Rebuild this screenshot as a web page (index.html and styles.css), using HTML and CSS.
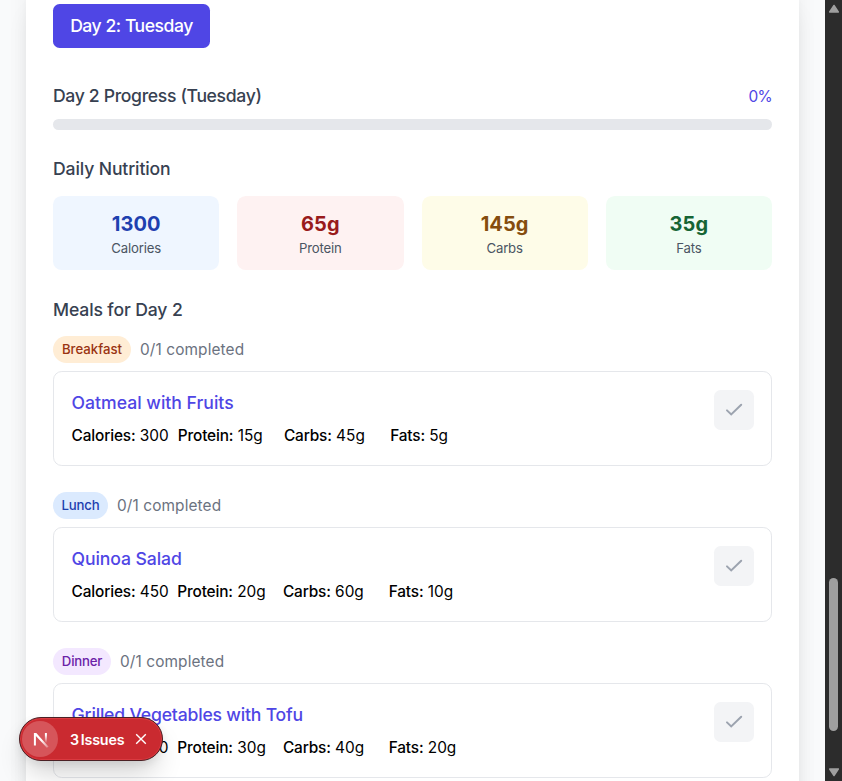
FILE: index.html
```html
<!DOCTYPE html>
<html lang="en">
<head>
<meta charset="utf-8">
<title>Meal Plan</title>
<link rel="stylesheet" href="styles.css">
</head>
<body>
<div class="window">
  <div class="page">
    <main class="panel">
      <button class="day-tab"><span>Day 2: Tuesday</span></button>
      <div class="progress-head"><h2 class="t-progress">Day 2 Progress (Tuesday)</h2><span class="percent">0%</span></div>
      <div class="progress-bar"></div>
      <h2 class="nutrition-title">Daily Nutrition</h2>
      <section class="stats">
        <div class="stat blue"><strong>1300</strong><span>Calories</span></div>
        <div class="stat red"><strong>65g</strong><span>Protein</span></div>
        <div class="stat yellow"><strong>145g</strong><span>Carbs</span></div>
        <div class="stat green"><strong>35g</strong><span>Fats</span></div>
      </section>
      <h2 class="meals-title">Meals for Day 2</h2>

      <section class="meal">
        <div class="meal-head"><span class="tag breakfast">Breakfast</span><span class="done">0/1 completed</span></div>
        <article class="card">
          <div class="info">
            <h3 class="oatmeal">Oatmeal with Fruits</h3>
            <div class="facts facts-first"><div><b>Calories:</b> 300</div><div><b>Protein:</b> 15g</div><div><b>Carbs:</b> 45g</div><div><b>Fats:</b> 5g</div></div>
          </div>
          <button class="check"><svg viewBox="0 0 20 20"><path d="M3 10.4 7.2 14.4 17.2 4.8"/></svg></button>
        </article>
      </section>

      <section class="meal">
        <div class="meal-head"><span class="tag lunch">Lunch</span><span class="done">0/1 completed</span></div>
        <article class="card">
          <div class="info">
            <h3 class="quinoa">Quinoa Salad</h3>
            <div class="facts"><div><b>Calories:</b> 450</div><div><b>Protein:</b> 20g</div><div><b>Carbs:</b> 60g</div><div><b>Fats:</b> 10g</div></div>
          </div>
          <button class="check"><svg viewBox="0 0 20 20"><path d="M3 10.4 7.2 14.4 17.2 4.8"/></svg></button>
        </article>
      </section>

      <section class="meal">
        <div class="meal-head"><span class="tag dinner">Dinner</span><span class="done">0/1 completed</span></div>
        <article class="card">
          <div class="info">
            <h3 class="grilled">Grilled Vegetables with Tofu</h3>
            <div class="facts"><div><b>Calories:</b> 350</div><div><b>Protein:</b> 30g</div><div><b>Carbs:</b> 40g</div><div><b>Fats:</b> 20g</div></div>
          </div>
          <button class="check"><svg viewBox="0 0 20 20"><path d="M3 10.4 7.2 14.4 17.2 4.8"/></svg></button>
        </article>
      </section>
    </main>
  </div>
  <aside class="scrollbar">
    <svg class="arrow" viewBox="0 0 12 10"><path d="M6 1.5 10.3 8H1.7Z"/></svg>
    <div class="thumb"></div>
    <svg class="arrow down" viewBox="0 0 12 10"><path d="M6 8.5 10.3 2H1.7Z"/></svg>
  </aside>
</div>
<div class="issues">
  <div class="logo"><svg viewBox="0 0 36 36">
    <defs>
      <linearGradient id="diag" x1="20" y1="19" x2="27" y2="27" gradientUnits="userSpaceOnUse"><stop stop-color="#fff"/><stop offset="1" stop-color="#fff" stop-opacity=".2"/></linearGradient>
      <linearGradient id="stem" x1="24" y1="14" x2="24" y2="22" gradientUnits="userSpaceOnUse"><stop stop-color="#fff"/><stop offset="1" stop-color="#fff" stop-opacity="0"/></linearGradient>
    </defs>
    <path d="M11.9 24.6V12h2.4l12.3 13.7-1.8 1L13.9 15v9.6Z" fill="url(#diag)"/><path d="M23.9 12v10" fill="none" stroke="url(#stem)" stroke-width="2"/></svg></div>
  <span class="issue-text">3 Issues</span>
  <svg class="close" viewBox="0 0 12 12"><path d="M1.2 1.2 10.8 10.8M10.8 1.2 1.2 10.8"/></svg>
</div>
</body>
</html>
```

FILE: styles.css
```css
* { box-sizing: border-box; }
body { margin: 0; font-family: Inter, "Liberation Sans", sans-serif; color: #000; overflow: hidden; }
h2, h3 { margin: 0; font-weight: 480; font-size: 17.6px; line-height: 26px; white-space: nowrap; }
h2 { color: #374151; letter-spacing: -.13px; }
.t-progress { letter-spacing: -.34px; position: relative; top: -1px; }
button { border: 0; padding: 0; font: inherit; display: flex; align-items: center; justify-content: center; }
.window { display: flex; width: 842px; height: 781px; overflow: hidden; }
.page { width: 825px; height: 781px; overflow: hidden; background: #f9fafb; padding: 0 26px; }
.panel { width: 773px; height: 900px; padding: 4px 27px 0; background: #fff; box-shadow: 0 -20px 22px -3px rgba(0,0,0,.07), 0 11px 22px -3px rgba(0,0,0,.07), 0 0 7px rgba(0,0,0,.02); }
.day-tab { width: 157px; height: 44px; border-radius: 6.6px; background: #4f46e5; color: #fff; font-size: 17.6px; font-weight: 480; letter-spacing: -.48px; padding-bottom: 1px; }
.progress-head { margin-top: 35px; height: 27px; display: flex; align-items: center; justify-content: space-between; }
.percent { font-size: 15.4px; letter-spacing: -.6px; color: #4f46e5; }
.progress-bar { margin-top: 9px; height: 11px; border-radius: 6px; background: #e5e7eb; }
.nutrition-title { margin-top: 26px; }
.stats { margin-top: 14px; display: grid; grid-template-columns: repeat(4, 1fr); gap: 18px; }
.stat { height: 74px; border-radius: 8.8px; display: flex; flex-direction: column; align-items: center; padding-top: 13px; }
.stat strong { font-size: 20px; line-height: 30px; font-weight: 650; letter-spacing: .1px; }
.stat span { font-size: 13.2px; line-height: 18px; letter-spacing: -.2px; color: #4b5563; }
.blue { background: #eff6ff; } .blue strong { color: #1e40af; }
.red { background: #fef2f2; } .red strong { color: #991b1b; }
.yellow { background: #fefce8; } .yellow strong { color: #854d0e; }
.green { background: #f0fdf4; } .green strong { color: #166534; }
.meals-title { margin: 27px 0 13px; }
.meal { margin-bottom: 26px; }
.meal-head { height: 27px; display: flex; align-items: center; gap: 9px; }
.tag { height: 27px; border-radius: 14px; font-size: 13.2px; line-height: 27px; font-weight: 480; text-align: center; }
.breakfast { width: 78px; background: #ffedd5; color: #9a3412; }
.lunch { width: 55px; background: #dbeafe; color: #1e40af; letter-spacing: -.2px; }
.dinner { width: 58px; background: #f3e8ff; color: #6b21a8; letter-spacing: -.2px; }
.done { font-size: 15.4px; letter-spacing: .11px; color: #6b7280; padding-bottom: 1px; }
.card { margin-top: 8px; height: 95px; border: 1px solid #e5e7eb; border-radius: 8.8px; padding: 18px 17px 0 17.6px; display: flex; justify-content: space-between; align-items: flex-start; }
.card h3 { color: #4f46e5; }
.card .quinoa { letter-spacing: -.1px; }
.card .grilled { letter-spacing: -.19px; }
.facts { margin-top: 9px; display: grid; grid-template-columns: repeat(4, 96.9px); column-gap: 8.8px; font-size: 15.4px; line-height: 22px; white-space: nowrap; }
.facts-first { grid-template-columns: repeat(4, 97.4px); }
.facts b { font-weight: 500; letter-spacing: -.15px; }
.check { width: 40px; height: 40px; border-radius: 6.6px; background: #f3f4f6; }
.check svg { width: 20px; height: 20px; }
.check path { fill: none; stroke: #9ca3af; stroke-width: 2; stroke-linecap: round; }
.scrollbar { width: 17px; height: 781px; background: #2c2c2c; display: flex; flex-direction: column; align-items: center; padding-top: 4px; }
.arrow { width: 12px; height: 10px; fill: #9f9f9f; stroke: #9f9f9f; stroke-width: 1.5; stroke-linejoin: round; }
.thumb { width: 9px; height: 153px; margin: 564px 0 36px; border-radius: 5px; background: #9f9f9f; }
.issues { position: absolute; left: 19px; top: 717px; width: 144px; height: 44px; border-radius: 22px; background: #ca2a30; border: 1px solid #4a2024; box-shadow: inset 0 0 0 1px #db3a40, 0 16px 28px -6px rgba(0,0,0,.2), 0 3px 8px rgba(0,0,0,.08); color: #fff; display: flex; align-items: center; padding-left: 2px; }
.logo { width: 36px; height: 36px; border-radius: 50%; background: #d6555a; }
.logo svg { display: block; width: 36px; height: 36px; }
.issue-text { margin-left: 12px; width: 56px; font-size: 14.3px; font-weight: 600; white-space: nowrap; letter-spacing: -.2px; word-spacing: -1.5px; }
.close { width: 12px; height: 12px; margin-left: 9px; fill: none; stroke: #fff; stroke-width: 1.4; }
```
